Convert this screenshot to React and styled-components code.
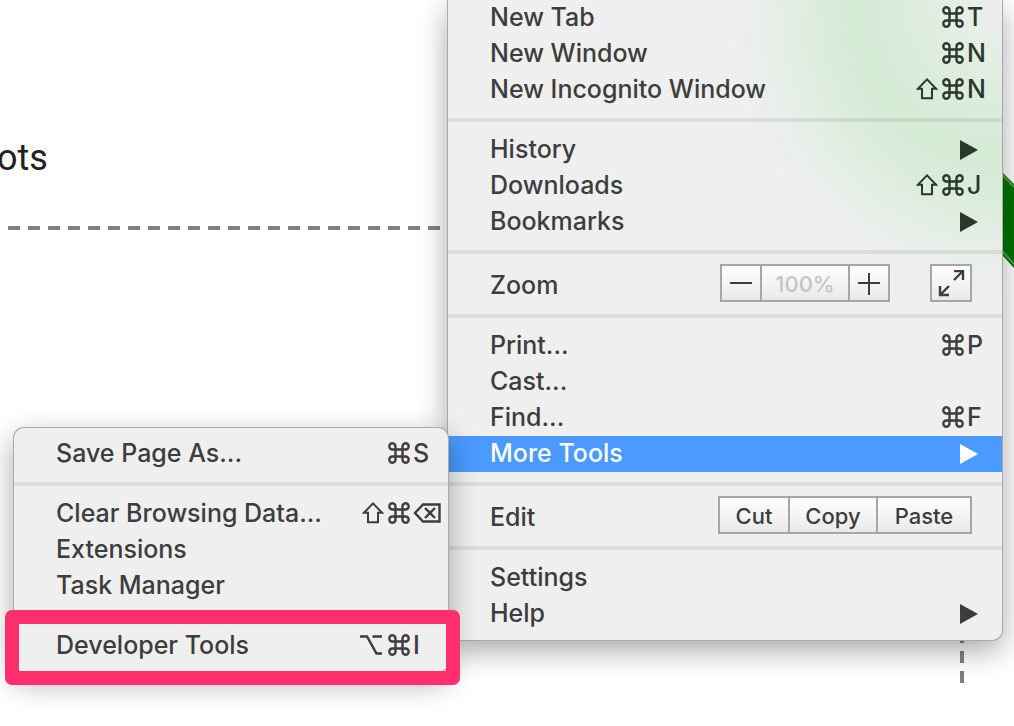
import React from "react";
import styled, { createGlobalStyle, css } from "styled-components";

const GlobalStyle = createGlobalStyle`
  * { box-sizing: border-box; }
  body {
    margin: 0;
    background: #fff;
    color: #3d3d3d;
    font-family: Inter, "Liberation Sans", sans-serif;
    overflow: hidden;
  }
  button { font: inherit; color: inherit; }
`;

const Page = styled.main`
  position: relative;
  min-height: 100vh;
  overflow: hidden;
`;

const Caption = styled.p`
  margin: 0 0 0 -3px;
  padding-top: 136px;
  font-family: Roboto, sans-serif;
  font-size: 36px;
  line-height: 44px;
  color: #212121;
`;

const DashedArea = styled.section`
  margin: 46px 50px 0 8px;
  height: 457px;
  background:
    repeating-linear-gradient(to right, #808080 0 12px, transparent 12px 20px) top left / 100% 4px no-repeat,
    repeating-linear-gradient(to top, #808080 0 12px, transparent 12px 20px) top right / 4px 100% no-repeat;
`;

const GreenArrow = styled.svg`
  position: absolute;
  top: 0;
  right: 0;
  display: block;
`;

const panel = css`
  margin: 0;
  padding: 0 0 8px;
  list-style: none;
  background-color: #efefef;
  box-shadow: 0 0 0 1px #a9a9a9, 0 10px 30px rgba(0, 0, 0, 0.36);
  font-size: 25px;
  font-weight: 500;
  line-height: 36px;
`;

const Menu = styled.ul`
  ${panel}
  position: absolute;
  top: 0;
  right: 12px;
  width: 554px;
  border-radius: 0 0 10px 10px;
  background-image: radial-gradient(
    ellipse 280px 305px at 100% 0,
    #ededed 0,
    #e4eee5 18%,
    #dbecdc 35%,
    #d4ebd5 52%,
    #daecdb 64%,
    #e4eee5 78%,
    #efefef 100%
  );
`;

const Submenu = styled.ul`
  ${panel}
  position: absolute;
  top: -8px;
  right: 100%;
  width: 434px;
  padding-top: 8px;
  border-radius: 10px;
  color: #3d3d3d;
`;

const Item = styled.li`
  position: relative;
`;

const Command = styled.button`
  display: flex;
  align-items: center;
  width: 100%;
  height: 36px;
  padding: 0 0 2px 42px;
  border: 0;
  text-align: left;
  background: ${(p) => (p.$active ? "#4a9aff" : "transparent")};
  color: ${(p) => (p.$active ? "#fff" : p.$tinted ? "#2b382c" : "#3d3d3d")};
`;

const Label = styled.span`
  flex: 1;
  color: ${(p) => (p.$active ? "#fff" : "#3d3d3d")};
`;

const Shortcut = styled.kbd`
  display: flex;
  align-items: center;
  gap: 3px;
  font: inherit;
`;

const Modifiers = styled.span`
  display: flex;
  gap: 4px;
`;

const Key = styled.span`
  width: 35px;
`;

const Glyph = styled.svg`
  display: block;
  fill: none;
  stroke: currentColor;
  stroke-width: ${(p) => (p.$bold ? 2.4 : 2)};
`;

const Arrow = styled.svg`
  display: block;
  margin: 2px 24px 0 0;
  fill: currentColor;
`;

const Divider = styled.li`
  height: 4px;
  margin: 10px 0;
  background: rgba(0, 0, 0, 0.075);
`;

const ToolRow = styled.li`
  display: flex;
  height: 40px;
  padding: 0 30px 0 42px;
  line-height: 42px;
`;

const Group = styled.div`
  display: flex;
  height: 38px;
  border: 2px solid #a6a6a6;
  background: linear-gradient(#fff, #e9e9e9);
  font-size: 22px;
  margin-left: ${(p) => (p.$spaced ? "40px" : "0")};
`;

const GroupButton = styled.button`
  display: flex;
  align-items: center;
  justify-content: center;
  width: ${(p) => p.$width}px;
  padding: 2px 0 0;
  border: 0;
  background: transparent;

  & + & { border-left: 2px solid #a6a6a6; }
`;

const Level = styled.output`
  width: 90px;
  border: solid #a6a6a6;
  border-width: 0 2px;
  line-height: 36px;
  text-align: center;
  color: #c4c4c4;
`;

const Highlight = styled.div`
  position: absolute;
  inset: -18px -12px -21px -9px;
  border: 14px solid #ff2f6d;
  border-radius: 7px;
  pointer-events: none;
`;

const glyphs = {
  cmd: (
    <Glyph $bold width="22" height="22" viewBox="0 0 22 22">
      <path d="M7.5 7.5H14.5V14.5H7.5ZM7.5 7.5H4.7A3.1 3.1 0 1 1 7.5 4.7ZM14.5 7.5V4.7A3.1 3.1 0 1 1 17.3 7.5ZM14.5 14.5H17.3A3.1 3.1 0 1 1 14.5 17.3ZM7.5 14.5V17.3A3.1 3.1 0 1 1 4.7 14.5Z" />
    </Glyph>
  ),
  shift: (
    <Glyph width="22" height="22" viewBox="0 0 22 22">
      <path d="M11 1.4L1.9 10.8H6V20.2H16V10.8H20.1Z" />
    </Glyph>
  ),
  option: (
    <Glyph $bold width="24" height="22" viewBox="0 0 24 22">
      <path d="M0 2.5H7L16.5 19.5H22M12.5 2.5H22" />
    </Glyph>
  ),
  del: (
    <Glyph $bold width="28" height="22" viewBox="0 0 28 22">
      <path d="M10 2.5H26.5V19.5H10L2 11ZM12 6L22 16M22 6L12 16" />
    </Glyph>
  ),
};

const names = { cmd: "Command", shift: "Shift", option: "Option", del: "Delete" };

function MenuItem({ label, mods = [], letter, arrow, active, tinted, children }) {
  return (
    <Item>
      <Command type="button" $active={active} $tinted={tinted} aria-haspopup={arrow ? "menu" : undefined}>
        <Label $active={active}>{label}</Label>
        {mods.length > 0 && (
          <Shortcut>
            <Modifiers>
              {mods.map((m) => (
                <span key={m} role="img" aria-label={names[m]}>{glyphs[m]}</span>
              ))}
            </Modifiers>
            <Key>{letter}</Key>
          </Shortcut>
        )}
        {arrow && (
          <Arrow width="18" height="20" viewBox="0 0 18 20">
            <path d="M0 0L18 10L0 20Z" />
          </Arrow>
        )}
      </Command>
      {children}
    </Item>
  );
}

export default function App() {
  return (
    <Page>
      <GlobalStyle />
      <Caption>ots</Caption>
      <DashedArea />
      <GreenArrow width="40" height="280" viewBox="0 0 40 280" aria-hidden="true">
        <path d="M0 144L40 184V268L0 224Z" fill="#007400" />
        <path d="M0 145L40 187M0 220L40 264" stroke="#4ba04b" strokeWidth="2" fill="none" />
      </GreenArrow>

      <Menu>
        <MenuItem label="New Tab" mods={["cmd"]} letter="T" tinted />
        <MenuItem label="New Window" mods={["cmd"]} letter="N" tinted />
        <MenuItem label="New Incognito Window" mods={["shift", "cmd"]} letter="N" tinted />
        <Divider />
        <MenuItem label="History" arrow tinted />
        <MenuItem label="Downloads" mods={["shift", "cmd"]} letter="J" tinted />
        <MenuItem label="Bookmarks" arrow tinted />
        <Divider />
        <ToolRow>
          <Label>Zoom</Label>
          <Group>
            <GroupButton $width={38} aria-label="Zoom out">
              <Glyph width="22" height="22" viewBox="0 0 22 22"><path d="M0 10H22" /></Glyph>
            </GroupButton>
            <Level>100%</Level>
            <GroupButton $width={38} aria-label="Zoom in">
              <Glyph width="22" height="22" viewBox="0 0 22 22"><path d="M0 10H22M11 0V22" /></Glyph>
            </GroupButton>
          </Group>
          <Group $spaced>
            <GroupButton $width={38} aria-label="Full screen">
              <Glyph $bold width="28" height="28" viewBox="0 0 28 28">
                <path d="M17 1H26V10M26 1L17 10M3 16V25H12M3 25L12 16" />
              </Glyph>
            </GroupButton>
          </Group>
        </ToolRow>
        <Divider />
        <MenuItem label="Print..." mods={["cmd"]} letter="P" />
        <MenuItem label="Cast..." />
        <MenuItem label="Find..." mods={["cmd"]} letter="F" />
        <MenuItem label="More Tools" arrow active>
          <Submenu>
            <MenuItem label="Save Page As..." mods={["cmd"]} letter="S" />
            <Divider />
            <MenuItem label="Clear Browsing Data..." mods={["shift", "cmd"]} letter={glyphs.del} />
            <MenuItem label="Extensions" />
            <MenuItem label="Task Manager" />
            <Divider />
            <MenuItem label="Developer Tools" mods={["option", "cmd"]} letter="I">
              <Highlight />
            </MenuItem>
          </Submenu>
        </MenuItem>
        <Divider />
        <ToolRow>
          <Label>Edit</Label>
          <Group>
            <GroupButton $width={68}>Cut</GroupButton>
            <GroupButton $width={88}>Copy</GroupButton>
            <GroupButton $width={94}>Paste</GroupButton>
          </Group>
        </ToolRow>
        <Divider />
        <MenuItem label="Settings" />
        <MenuItem label="Help" arrow />
      </Menu>
    </Page>
  );
}
